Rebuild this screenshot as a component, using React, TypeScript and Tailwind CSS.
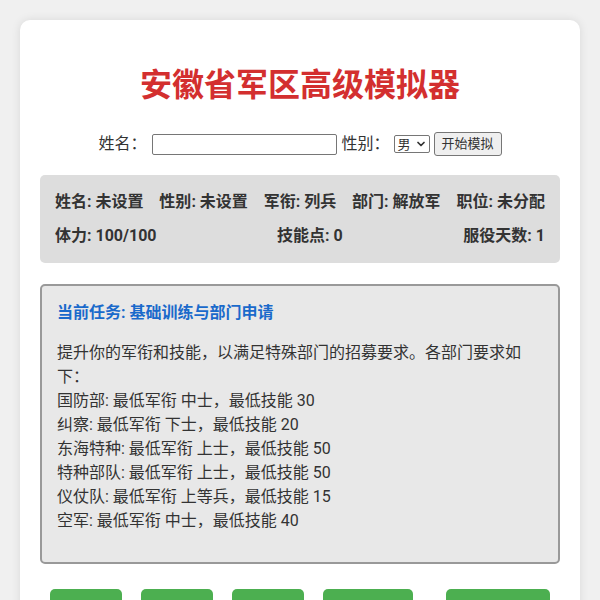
import { ChevronDown } from 'lucide-react'

const stats = [
  ['姓名', '未设置'],
  ['性别', '未设置'],
  ['军衔', '列兵'],
  ['部门', '解放军'],
  ['职位', '未分配'],
]

const requirements = [
  '国防部: 最低军衔 中士，最低技能 30',
  '纠察: 最低军衔 下士，最低技能 20',
  '东海特种: 最低军衔 上士，最低技能 50',
  '特种部队: 最低军衔 上士，最低技能 50',
  '仪仗队: 最低军衔 上等兵，最低技能 15',
  '空军: 最低军衔 中士，最低技能 40',
]

export default function App() {
  return (
    <div className="min-h-screen bg-[#f0f0f0] p-[20px] font-['Roboto','Noto_Sans_CJK_SC',sans-serif] text-[#333]">
      <div className="rounded-[10px] bg-white px-[20px] pt-[20px] pb-[20px] shadow-[0_0_10px_rgba(0,0,0,0.1)]">
        {/* ── Title ── */}
        <h1 className="mt-[22px] mb-[20px] text-center text-[32px] font-bold leading-[46px] text-[#d32f2f]">
          安徽省军区高级模拟器
        </h1>

        {/* ── Setup form ── */}
        <div className="flex h-[32px] items-center justify-center text-[16px]">
          <label className="mr-[6px]">姓名：</label>
          <input
            type="text"
            className="h-[21px] w-[185px] rounded-[2px] border border-[#767676] px-[2px] text-[13px] outline-none"
          />
          <label className="ml-[4px] mr-[4px]">性别：</label>
          <div className="flex h-[18px] w-[36px] items-center justify-between rounded-[2px] border border-[#767676] pl-[3px] pr-[2px] text-[13px] leading-none">
            <span>男</span>
            <ChevronDown size={12} strokeWidth={3.5} />
          </div>
          <button className="ml-[4px] h-[24px] rounded-[3px] border border-[#767676] bg-[#efefef] px-[7px] text-[13px]">
            开始模拟
          </button>
        </div>

        {/* ── Status panel ── */}
        <div className="mt-[15px] flex flex-col gap-[10px] rounded-[5px] bg-[#dddddd] p-[15px] text-[16px] font-bold leading-6">
          <div className="flex justify-between">
            {stats.map(([k, v]) => (
              <span key={k}>
                {k}: {v}
              </span>
            ))}
          </div>
          <div className="flex justify-between">
            <span>体力: 100/100</span>
            <span>技能点: 0</span>
            <span>服役天数: 1</span>
          </div>
        </div>

        {/* ── Current mission ── */}
        <div className="mt-[21px] rounded-[5px] border-2 border-[#999] bg-[#e8e8e8] p-[15px]">
          <h3 className="mb-4 text-[16px] font-bold leading-6 text-[#1a6acb]">当前任务: 基础训练与部门申请</h3>
          <div className="mb-[14px] text-[16px] leading-6">
            <p>提升你的军衔和技能，以满足特殊部门的招募要求。各部门要求如下：</p>
            {requirements.map((r) => (
              <p key={r}>{r}</p>
            ))}
          </div>
        </div>

        {/* ── Actions ── */}
        <div className="mt-[25px] flex px-[10px] text-[16px] text-white">
          <button className="h-[40px] w-[72px] rounded-[5px] bg-[#4caf50]">训练</button>
          <button className="ml-[19px] h-[40px] w-[72px] rounded-[5px] bg-[#4caf50]">休息</button>
          <button className="ml-[19px] h-[40px] w-[72px] rounded-[5px] bg-[#4caf50]">巡逻</button>
          <button className="ml-[19px] h-[40px] w-[90px] rounded-[5px] bg-[#4caf50]">学技能</button>
          <button className="ml-[33px] h-[40px] w-[104px] rounded-[5px] bg-[#4caf50]">申请部门</button>
        </div>
      </div>
    </div>
  )
}
